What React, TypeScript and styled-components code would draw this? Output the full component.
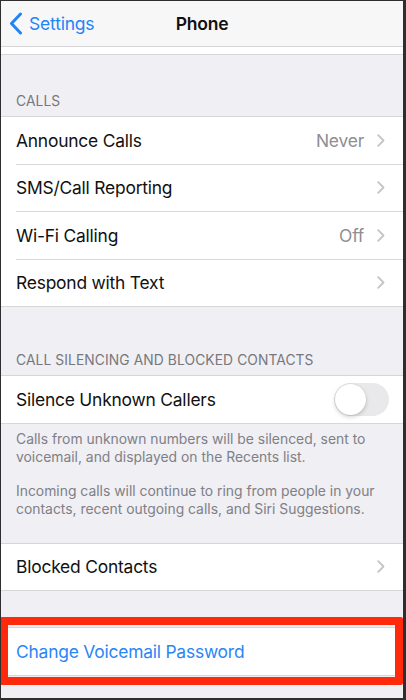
import React from 'react';
import styled, { createGlobalStyle } from 'styled-components';

const GlobalStyle = createGlobalStyle`
  html, body {
    margin: 0;
    padding: 0;
    background: #ffffff;
  }

  body {
    font-family: Inter, "Liberation Sans", Arial, sans-serif;
    -webkit-font-smoothing: antialiased;
  }
`;

const Frame = styled.div`
  width: 406px;
  height: 700px;
  box-sizing: border-box;
  border: 1px solid #2e2e2e;
  border-right-width: 3px;
  border-bottom-width: 2px;
  background-color: #efeff4;
  overflow: hidden;
  display: flex;
  flex-direction: column;
`;

const NavBar = styled.header`
  flex: none;
  height: 45px;
  background-color: #f7f7f7;
  border-bottom: 1px solid #d6d6d9;
  display: grid;
  grid-template-columns: 1fr auto 1fr;
  align-items: center;
`;

const BackButton = styled.button`
  justify-self: start;
  display: flex;
  align-items: center;
  gap: 6px;
  padding: 0 0 0 8px;
  border: none;
  background: none;
  color: #1f84f8;
  font: inherit;
  font-size: 17.5px;
  letter-spacing: -0.2px;
  cursor: pointer;
`;

const Title = styled.h1`
  margin: 0;
  font-size: 17.5px;
  font-weight: 600;
  color: #111111;
  letter-spacing: -0.2px;
`;

const PeekCell = styled.div`
  flex: none;
  height: 7px;
  background-color: #ffffff;
  border-bottom: 1px solid #d6d6d9;
`;

interface SectionHeaderProps {
  height: number;
}

const SectionHeader = styled.div<SectionHeaderProps>`
  flex: none;
  height: ${({ height }) => height}px;
  box-sizing: border-box;
  display: flex;
  align-items: flex-end;
  padding: 0 15px 7px;
  color: #77777c;
  font-size: 13.8px;
  text-transform: uppercase;
  letter-spacing: 0.1px;
`;

interface GroupProps {
  gap?: number;
}

const Group = styled.section<GroupProps>`
  flex: none;
  position: relative;
  margin-top: ${({ gap }) => gap ?? 0}px;
  background-color: #ffffff;
  border-top: 1px solid #d6d6d9;
  border-bottom: 1px solid #d6d6d9;
`;

interface RowProps {
  height?: number;
}

const Row = styled.div<RowProps>`
  height: ${({ height }) => height ?? 46.5}px;
  display: flex;
  align-items: center;
  padding: 0 18px 0 15px;
  position: relative;

  & + & {
    border-top: 1px solid #d9d9dc;
    margin-left: 15px;
    padding-left: 0;
  }
`;

interface LabelProps {
  link?: boolean;
}

const Label = styled.span<LabelProps>`
  flex: 1;
  font-size: 17.4px;
  letter-spacing: -0.2px;
  color: ${({ link }) => link ? '#2a86f7' : '#111111'};
`;

const Value = styled.span`
  font-size: 17.4px;
  letter-spacing: -0.2px;
  color: #8e8e93;
  margin-right: 13px;
`;

const Chevron = styled.svg`
  flex: none;
  width: 8px;
  height: 13px;
`;

const Switch = styled.div`
  flex: none;
  width: 55px;
  height: 33px;
  margin-right: -4px;
  border-radius: 17px;
  background-color: #e9e9eb;
  position: relative;

  &::after {
    content: "";
    position: absolute;
    top: 1px;
    left: 1px;
    width: 31px;
    height: 31px;
    border-radius: 50%;
    background-color: #ffffff;
    box-shadow: 0 2px 4px rgba(0, 0, 0, 0.18), 0 0 0 0.5px rgba(0, 0, 0, 0.08);
  }
`;

const Footer = styled.div`
  flex: none;
  padding: 6px 15px 0;
  color: #808086;
  font-size: 13.9px;
  line-height: 18.5px;

  p {
    margin: 0 0 15px;
  }

  p:last-child {
    margin-bottom: 0;
  }
`;

const Highlight = styled.div`
  position: absolute;
  top: -11px;
  bottom: -10px;
  left: -1px;
  right: 0;
  border: 8px solid #ff2a0c;
  border-radius: 2px;
  pointer-events: none;
`;

const ChevronIcon = () => (
  <Chevron viewBox="0 0 8 13">
    <path d="M1.2 1.2 6.5 6.5 1.2 11.8" fill="none" stroke="#c4c4c8" strokeWidth="1.8" strokeLinecap="round" strokeLinejoin="round" />
  </Chevron>
);

const BackIcon = () => (
  <svg width="14" height="23" viewBox="0 0 14 23">
    <path d="M11.5 2 2.5 11.5 11.5 21" fill="none" stroke="#1f84f8" strokeWidth="3" strokeLinecap="round" strokeLinejoin="round" />
  </svg>
);

const calls = [
  { label: 'Announce Calls', value: 'Never' },
  { label: 'SMS/Call Reporting' },
  { label: 'Wi-Fi Calling', value: 'Off' },
  { label: 'Respond with Text' },
];

export default function App() {
  return (
    <>
      <GlobalStyle />
      <Frame>
        <NavBar>
          <BackButton>
            <BackIcon />
            Settings
          </BackButton>
          <Title>Phone</Title>
          <span />
        </NavBar>
        <PeekCell />

        <SectionHeader height={61}>Calls</SectionHeader>
        <Group>
          {calls.map((item) => (
            <Row key={item.label}>
              <Label>{item.label}</Label>
              {item.value && <Value>{item.value}</Value>}
              <ChevronIcon />
            </Row>
          ))}
        </Group>

        <SectionHeader height={68}>Call Silencing and Blocked Contacts</SectionHeader>
        <Group>
          <Row>
            <Label>Silence Unknown Callers</Label>
            <Switch />
          </Row>
        </Group>
        <Footer>
          <p>Calls from unknown numbers will be silenced, sent to voicemail, and displayed on the Recents list.</p>
          <p>Incoming calls will continue to ring from people in your contacts, recent outgoing calls, and Siri Suggestions.</p>
        </Footer>

        <Group gap={24}>
          <Row>
            <Label>Blocked Contacts</Label>
            <ChevronIcon />
          </Row>
        </Group>

        <Group gap={36}>
          <Row height={47}>
            <Label link>Change Voicemail Password</Label>
          </Row>
          <Highlight />
        </Group>
      </Frame>
    </>
  );
}
